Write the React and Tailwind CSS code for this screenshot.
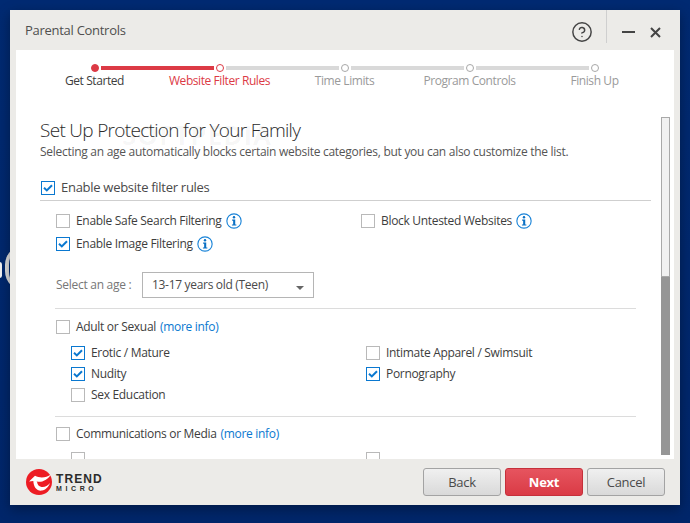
import React from "react";
import { CircleHelp } from "lucide-react";

const steps = [
  { label: "Get Started", state: "done" },
  { label: "Website Filter Rules", state: "current" },
  { label: "Time Limits", state: "todo" },
  { label: "Program Controls", state: "todo" },
  { label: "Finish Up", state: "todo" },
];

const Check = ({ checked, className = "" }) => (
  <span
    className={`flex h-[14px] w-[14px] shrink-0 items-center justify-center border ${
      checked ? "border-[#0a78d0]" : "border-[#b9b9b9]"
    } ${className}`}
  >
    {checked && (
      <svg width="10" height="8" viewBox="0 0 10 8">
        <path d="M1 3.8 L3.8 6.4 L9 1.2" fill="none" stroke="#0a78d0" strokeWidth="2" />
      </svg>
    )}
  </span>
);

const Info = () => (
  <svg width="16" height="16" viewBox="0 0 17 17" className="shrink-0">
    <circle cx="8.5" cy="8.5" r="7.6" fill="none" stroke="#1a84d8" strokeWidth="1.2" />
    <circle cx="8.5" cy="4.6" r="1.3" fill="#0a70c4" />
    <path d="M6.5 7h3.3v5.2h1.2v1.2H6.3v-1.2h1.3V8.2H6.5z" fill="#0a70c4" />
  </svg>
);

const Option = ({ label, checked, info, more, className = "" }) => (
  <div className={`flex items-center tracking-[-0.31px] ${className}`}>
    <Check checked={checked} />
    <span className="ml-[6px] text-[#3d3d3d]">{label}</span>
    {more && <span className="ml-1 text-[#0a78d0]">(more info)</span>}
    {info && (
      <span className="ml-[4px]">
        <Info />
      </span>
    )}
  </div>
);

const Button = ({ children, primary }) => (
  <button
    className={`h-[28px] w-[78px] rounded-[3px] border pt-[1px] text-[13px] ${
      primary
        ? "border-[#c5303a] bg-gradient-to-b from-[#e6545f] to-[#da3a45] font-bold text-white"
        : "border-[#a3a3a3] bg-gradient-to-b from-[#f0f0f0] to-[#d9d9d9] text-[#4a4a4a]"
    }`}
  >
    {children}
  </button>
);

const TrendLogo = () => (
  <div className="flex items-center">
    <svg width="26" height="26" viewBox="0 0 26 26">
      <circle cx="13" cy="13" r="13" fill="#ed1c24" />
      <path d="M3 12.5 L9 6.8 C14 9.5 20 9 25 5.5 C21 12 14 14 10.5 12.2 L11 14 L7.2 12 Z" fill="#fff" />
      <path d="M7.4 12 C7.4 18 11 22.4 16 21.6 C19.5 21 22.6 18 24 14 C21.5 16.8 18.5 18.6 15.5 18 C12.8 17.5 11.2 15.4 11 12.5 Z" fill="#fff" />
    </svg>
    <div className="ml-1 flex flex-col font-['Liberation_Sans',sans-serif] text-[#2b2b2b]">
      <span className="text-[12px] leading-[12px] font-bold tracking-[1.1px]">TREND</span>
      <span className="text-[7px] leading-[7px] font-bold tracking-[3.6px]">MICRO</span>
    </div>
  </div>
);

const App = () => {
  return (
    <div className="relative h-[523px] w-[690px] overflow-hidden bg-gradient-to-b from-[#002a72] to-[#00266a] pt-[10px] pl-[10px] font-['Open_Sans',sans-serif] text-[12px] tracking-[-0.28px]">
      {/* wallpaper showing at the left edge */}
      <div className="absolute top-[245px] left-[5px] h-[46px] w-[40px] rounded-full border-l-[4px] border-l-[#dcdcdc]" />
      <div className="absolute top-[262px] left-[-3px] h-[16px] w-[5px] rounded-full bg-[#f2f2f2]" />

      <div className="relative flex h-[495px] w-[670px] flex-col bg-[#ecebe8] shadow-[0_4px_12px_rgba(0,0,0,0.35)]">
        {/* title bar */}
        <div className="flex h-[40px] shrink-0 items-start">
          <div className="mt-[11px] ml-[15px] flex-1 text-[13px] text-[#4f4f4f]">Parental Controls</div>
          <CircleHelp className="mt-[11px] h-[22px] w-[22px] text-[#444]" strokeWidth={1.6} />
          <div className="ml-[13px] h-[33px] w-px bg-[#cfcfcf]" />
          <div className="mt-[21px] ml-[15px] h-[2px] w-[13px] bg-[#444]" />
          <svg width="11" height="11" viewBox="0 0 11 11" className="mt-[17px] ml-[15px] mr-[19px]">
            <path d="M1 1 L10 10 M10 1 L1 10" stroke="#444" strokeWidth="2" />
          </svg>
        </div>

        {/* white content */}
        <div className="mx-[6px] flex h-[409px] shrink-0 bg-white">
          <div className="relative min-w-0 flex-1 overflow-hidden">
            {/* stepper */}
            <div className="mt-[12px] ml-[16px] flex">
              {steps.map((s, i) => (
                <div key={s.label} className="relative flex w-[125px] flex-col items-center">
                  <div className="flex h-[12px] items-center">
                    <span
                      className={`h-[8px] w-[8px] rounded-full border ${
                        s.state === "done"
                          ? "border-[#dc3a45] bg-[#dc3a45]"
                          : s.state === "current"
                            ? "border-[#dc3a45] bg-white"
                            : "border-[#a8a8a8] bg-white"
                      }`}
                    />
                  </div>
                  {i < steps.length - 1 && (
                    <span
                      className={`absolute top-[4px] left-[68.5px] h-[4px] w-[113px] ${
                        i === 0 ? "bg-[#dc3a45]" : "bg-[#d9d9d9]"
                      }`}
                    />
                  )}
                  <span
                    className={`mt-[-1px] whitespace-nowrap leading-[16px] tracking-[-0.42px] ${
                      s.state === "done"
                        ? "text-[#3d3d3d]"
                        : s.state === "current"
                          ? "text-[#dc3a45]"
                          : "text-[#9a9a9a]"
                    }`}
                  >
                    {s.label}
                  </span>
                </div>
              ))}
            </div>

            <h1 className="mt-[28px] ml-[24px] text-[19px] leading-[26px] font-light tracking-[-0.69px] text-[#2b2b2b]">
              Set Up Protection for Your Family
            </h1>
            <p className="ml-[24px] leading-[17px] text-[#555]">
              Selecting an age automatically blocks certain website categories, but you can also customize the list.
            </p>

            <div className="mt-[17px] ml-[24px] flex h-[21px] w-[611px] items-center">
              <Check checked className="ml-[1px]" />
              <span className="ml-[6px] text-[13px] text-[#4a4a4a]">Enable website filter rules</span>
            </div>
            <div className="mt-[2px] ml-[24px] h-px w-[611px] bg-[#cfcfcf]" />

            <div className="mt-[11px] ml-[40px] flex items-start">
              <div className="w-[305px]">
                <Option label="Enable Safe Search Filtering" info className="h-[17px]" />
                <Option label="Enable Image Filtering" checked info className="mt-[6px] h-[17px]" />
              </div>
              <Option label="Block Untested Websites" info className="h-[17px]" />
            </div>

            <div className="mt-[20px] ml-[40px] flex items-center">
              <span className="w-[86px] text-[#777]">Select an age :</span>
              <div className="flex h-[26px] w-[172px] items-center justify-between border border-[#b5b5b5] pr-[9px] pl-[9px] tracking-[-0.31px] text-[#4a4a4a]">
                13-17 years old (Teen)
                <span className="mt-[5px] h-0 w-0 border-x-[4px] border-t-[4px] border-x-transparent border-t-[#666]" />
              </div>
            </div>
            <div className="mt-[10px] ml-[39px] h-px w-[581px] bg-[#dcdcdc]" />

            <Option label="Adult or Sexual" more className="mt-[10px] ml-[40px] h-[15px]" />
            <div className="mt-[11px] ml-[55px] grid w-[500px] grid-cols-[295px_1fr] gap-y-[6px]">
              <Option label="Erotic / Mature" checked className="h-[15px]" />
              <Option label="Intimate Apparel / Swimsuit" className="h-[15px]" />
              <Option label="Nudity" checked className="h-[15px]" />
              <Option label="Pornography" checked className="h-[15px]" />
              <Option label="Sex Education" className="h-[15px]" />
            </div>
            <div className="mt-[14px] ml-[39px] h-px w-[581px] bg-[#dcdcdc]" />

            <Option label="Communications or Media" more className="mt-[9px] ml-[40px] h-[15px]" />
            <div className="mt-[10px] ml-[55px] grid w-[500px] grid-cols-[295px_1fr]">
              <Option label="" className="h-[15px]" />
              <Option label="" className="h-[15px]" />
            </div>

            {/* faint site watermark */}
            <div className="pointer-events-none absolute top-[66px] left-[106px] text-[26px] font-bold tracking-[1px] text-[#000]/[0.04]">
              SOFTPEDIA
            </div>
          </div>

          {/* scrollbar */}
          <div className="mt-[67px] mr-[4px] mb-[4px] flex w-[9px] shrink-0 flex-col">
            <div className="h-[160px] border border-[#a9a9a9] bg-[#f1f1f1]" />
            <div className="flex-1 bg-[#969696]" />
          </div>
        </div>

        {/* footer */}
        <div className="flex flex-1 items-center justify-between pr-[15px] pl-[16px]">
          <TrendLogo />
          <div className="flex gap-[4px]">
            <Button>Back</Button>
            <Button primary>Next</Button>
            <Button>Cancel</Button>
          </div>
        </div>
      </div>
    </div>
  );
};

export default App;
